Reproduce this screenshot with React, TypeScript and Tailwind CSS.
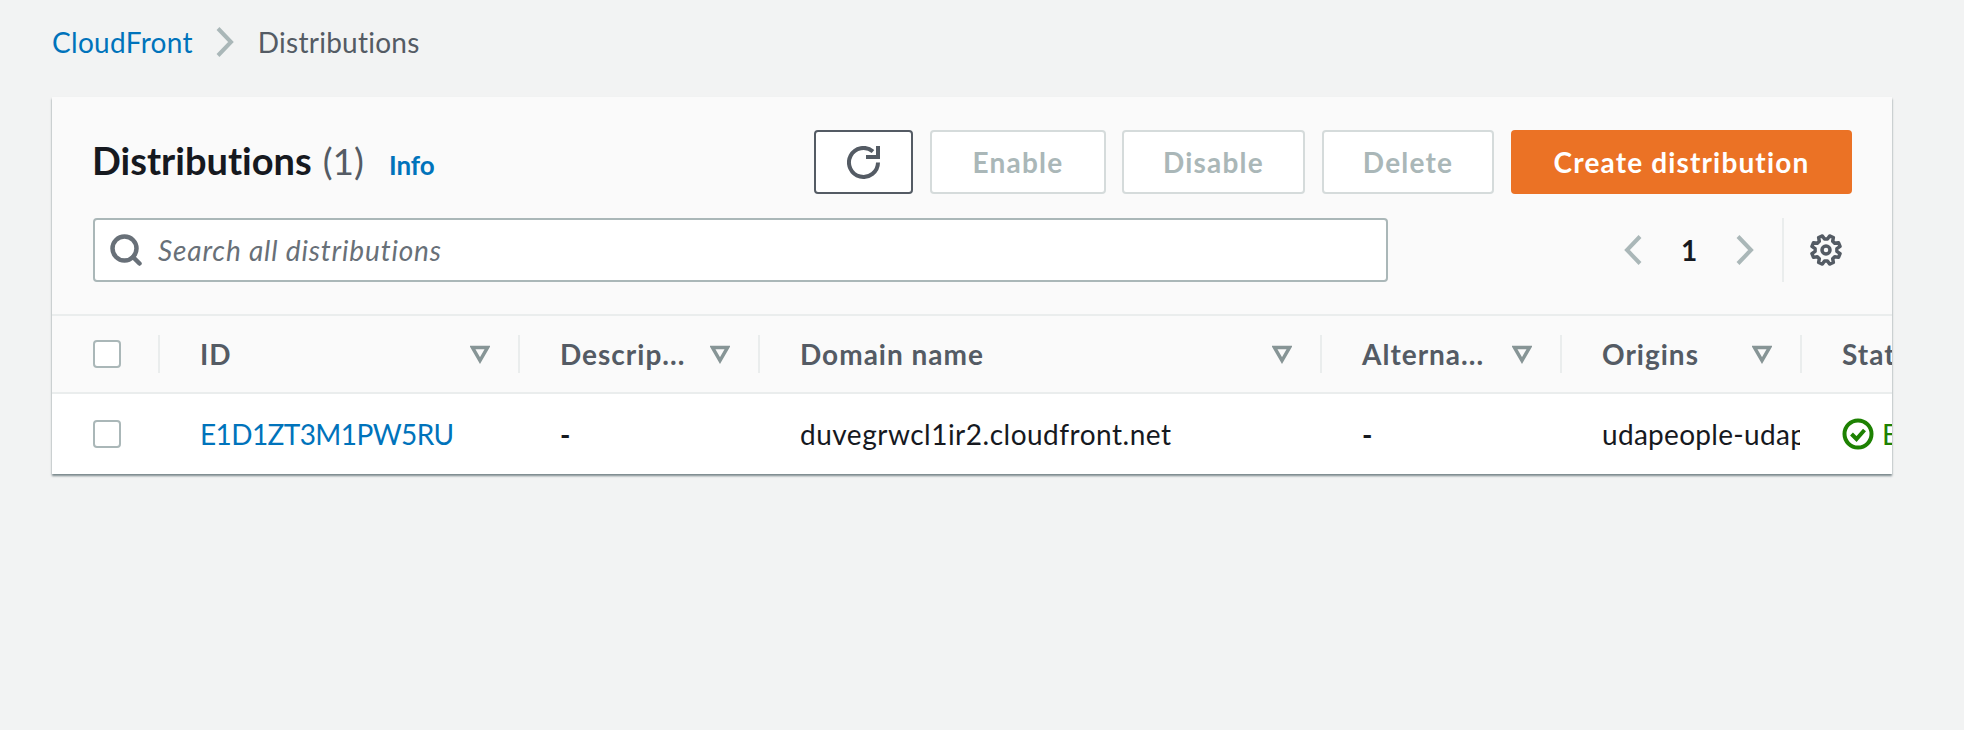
import { Search } from "lucide-react";

const columns = [
  { label: "ID", width: "w-[360px]" },
  { label: "Descrip...", width: "w-[240px]" },
  { label: "Domain name", width: "w-[562px]" },
  { label: "Alterna...", width: "w-[240px]" },
  { label: "Origins", width: "w-[240px]" },
];

// gear outline: 8 teeth round the centre of a 32 box
const gearPoints = Array.from({ length: 8 }, (_, i) => {
  const a = (i * 45 + 22.5) * (Math.PI / 180);
  const at = (r: number, d: number) => {
    const b = a + d * (Math.PI / 180);
    return `${(16 + r * Math.sin(b)).toFixed(2)},${(16 - r * Math.cos(b)).toFixed(2)}`;
  };
  return [at(11, -15), at(14.5, -8), at(14.5, 8), at(11, 15)].join(" ");
}).join(" ");

function GearIcon() {
  return (
    <svg viewBox="0 0 32 32" className="w-8 h-8 text-[#545b64]" fill="none" stroke="currentColor" strokeWidth="3.5" strokeLinejoin="round">
      <polygon points={gearPoints} />
      <circle cx="16" cy="16" r="4" />
    </svg>
  );
}

function FilterIcon() {
  return (
    <svg viewBox="0 0 20 20" className="w-5 h-5 shrink-0 text-[#879596]" fill="none" stroke="currentColor" strokeWidth="3.5" strokeLinejoin="miter">
      <path d="M2.5 3.5h15L10 16.5z" />
    </svg>
  );
}

function Chevron({ left, className }: { left?: boolean; className: string }) {
  return (
    <svg viewBox="0 0 18 30" className={className} fill="none" stroke="currentColor" strokeWidth="4">
      <path d={left ? "M16 1.5L3 15l13 13.5" : "M2 1.5L15 15 2 28.5"} />
    </svg>
  );
}

function RefreshIcon() {
  return (
    <svg viewBox="0 0 33 33" className="w-[33px] h-[33px] text-[#545b64]" fill="none" stroke="currentColor" strokeWidth="4">
      <path d="M31 16.5A14.5 14.5 0 1 1 26 5.5" />
      <path d="M31 0v11H19" strokeLinejoin="miter" />
    </svg>
  );
}

function DisabledButton({ label, width }: { label: string; width: string }) {
  return (
    <button className={`${width} h-16 rounded-[4px] border-2 border-[#d5dbdb] bg-white text-[#aab7b8] text-[28px] font-bold tracking-[1.2px]`}>
      {label}
    </button>
  );
}

function Checkbox() {
  return <div className="w-7 h-7 rounded-[4px] border-2 border-[#aab7b8] bg-white" />;
}

export default function App() {
  return (
    <div className="bg-[#f2f3f3] font-[Lato,sans-serif] [font-variant-ligatures:none] text-[#16191f] pl-[52px] pt-[26px] h-[730px] overflow-hidden">
      {/* breadcrumb */}
      <div className="flex items-center h-8 text-[28px]">
        <span className="text-[#0073bb] tracking-[0.3px]">CloudFront</span>
        <Chevron className="w-[18px] h-[30px] ml-[23px] mr-[24px] text-[#aab7b8]" />
        <span className="text-[#545b64] tracking-[0.25px]">Distributions</span>
      </div>

      <div className="mt-[39px] w-[1840px] h-[377px] bg-white shadow-[0_2px_2px_rgba(0,28,36,0.5)] overflow-hidden">
        <div className="bg-[#fafafa] pt-[33px] pl-[41px] pr-10 h-[219px] border-b-2 border-[#eaeded]">
          <div className="flex items-center justify-between">
            <div className="flex items-baseline mb-1 -ml-px">
              <h1 className="text-[38px] font-bold">Distributions</h1>
              <span className="text-[37px] text-[#545b64] ml-[11px]">(1)</span>
              <span className="text-[26px] font-bold text-[#0073bb] ml-[25px]">Info</span>
            </div>
            <div className="flex items-center">
              <button className="w-[99px] h-16 mr-[17px] rounded-[4px] border-2 border-[#545b64] bg-white flex items-center justify-center">
                <RefreshIcon />
              </button>
              <DisabledButton label="Enable" width="w-[176px] mr-4" />
              <DisabledButton label="Disable" width="w-[183px] mr-[17px]" />
              <DisabledButton label="Delete" width="w-[172px] mr-[17px]" />
              <button className="w-[341px] h-16 rounded-[4px] bg-[#eb7225] text-white text-[28px] font-bold tracking-[1.15px]">
                Create distribution
              </button>
            </div>
          </div>
          <div className="flex items-center justify-between mt-6">
            <div className="w-[1295px] h-16 rounded-[4px] border-2 border-[#aab7b8] bg-white flex items-center pl-[13px] gap-[14px]">
              <Search className="w-9 h-9 text-[#687078]" strokeWidth={3} />
              <span className="italic text-[28px] text-[#687078] tracking-[0.85px]">Search all distributions</span>
            </div>
            <div className="flex items-center pr-[10px]">
              <Chevron left className="w-[18px] h-[30px] text-[#aab7b8]" />
              <span className="w-[94px] text-center text-[28px] font-bold">1</span>
              <Chevron className="w-[18px] h-[30px] text-[#aab7b8]" />
              <div className="w-0.5 h-16 bg-[#eaeded] ml-[28px] mr-[26px]" />
              <GearIcon />
            </div>
          </div>
        </div>

        {/* table head */}
        <div className="flex h-[78px] bg-[#fafafa] border-b-2 border-[#eaeded] items-center text-[#545b64] text-[28px] font-bold whitespace-nowrap tracking-[1px]">
          <div className="w-[108px] h-[38px] shrink-0 pl-[41px] flex items-center border-r-2 border-[#eaeded]">
            <Checkbox />
          </div>
          {columns.map((col) => (
            <div key={col.label} className={`${col.width} h-[38px] shrink-0 pl-10 pr-[28px] flex items-center justify-between border-r-2 border-[#eaeded]`}>
              <span>{col.label}</span>
              <FilterIcon />
            </div>
          ))}
          <div className="pl-10">Status</div>
        </div>

        {/* table row */}
        <div className="flex h-20 items-center text-[28px] whitespace-nowrap">
          <div className="w-[108px] shrink-0 pl-[41px]">
            <Checkbox />
          </div>
          <div className="w-[360px] shrink-0 pl-10 text-[#0073bb] tracking-[-0.6px]">E1D1ZT3M1PW5RU</div>
          <div className="w-[240px] shrink-0 pl-10 font-bold">-</div>
          <div className="w-[562px] shrink-0 pl-10 tracking-[0.5px]">duvegrwcl1ir2.cloudfront.net</div>
          <div className="w-[240px] shrink-0 pl-10 font-bold">-</div>
          <div className="w-[238px] mr-0.5 shrink-0 pl-10 overflow-hidden tracking-[0.3px]">udapeople-udapeople-frontend</div>
          <div className="flex items-center pl-10 gap-2 text-[#1d8102]">
            <svg viewBox="0 0 32 32" className="w-8 h-8 shrink-0" fill="none" stroke="currentColor" strokeWidth="4">
              <circle cx="16" cy="16" r="13.5" />
              <path d="M9.5 16l5 5 8-9" />
            </svg>
            <span>Enabled</span>
          </div>
        </div>
      </div>
    </div>
  );
}
